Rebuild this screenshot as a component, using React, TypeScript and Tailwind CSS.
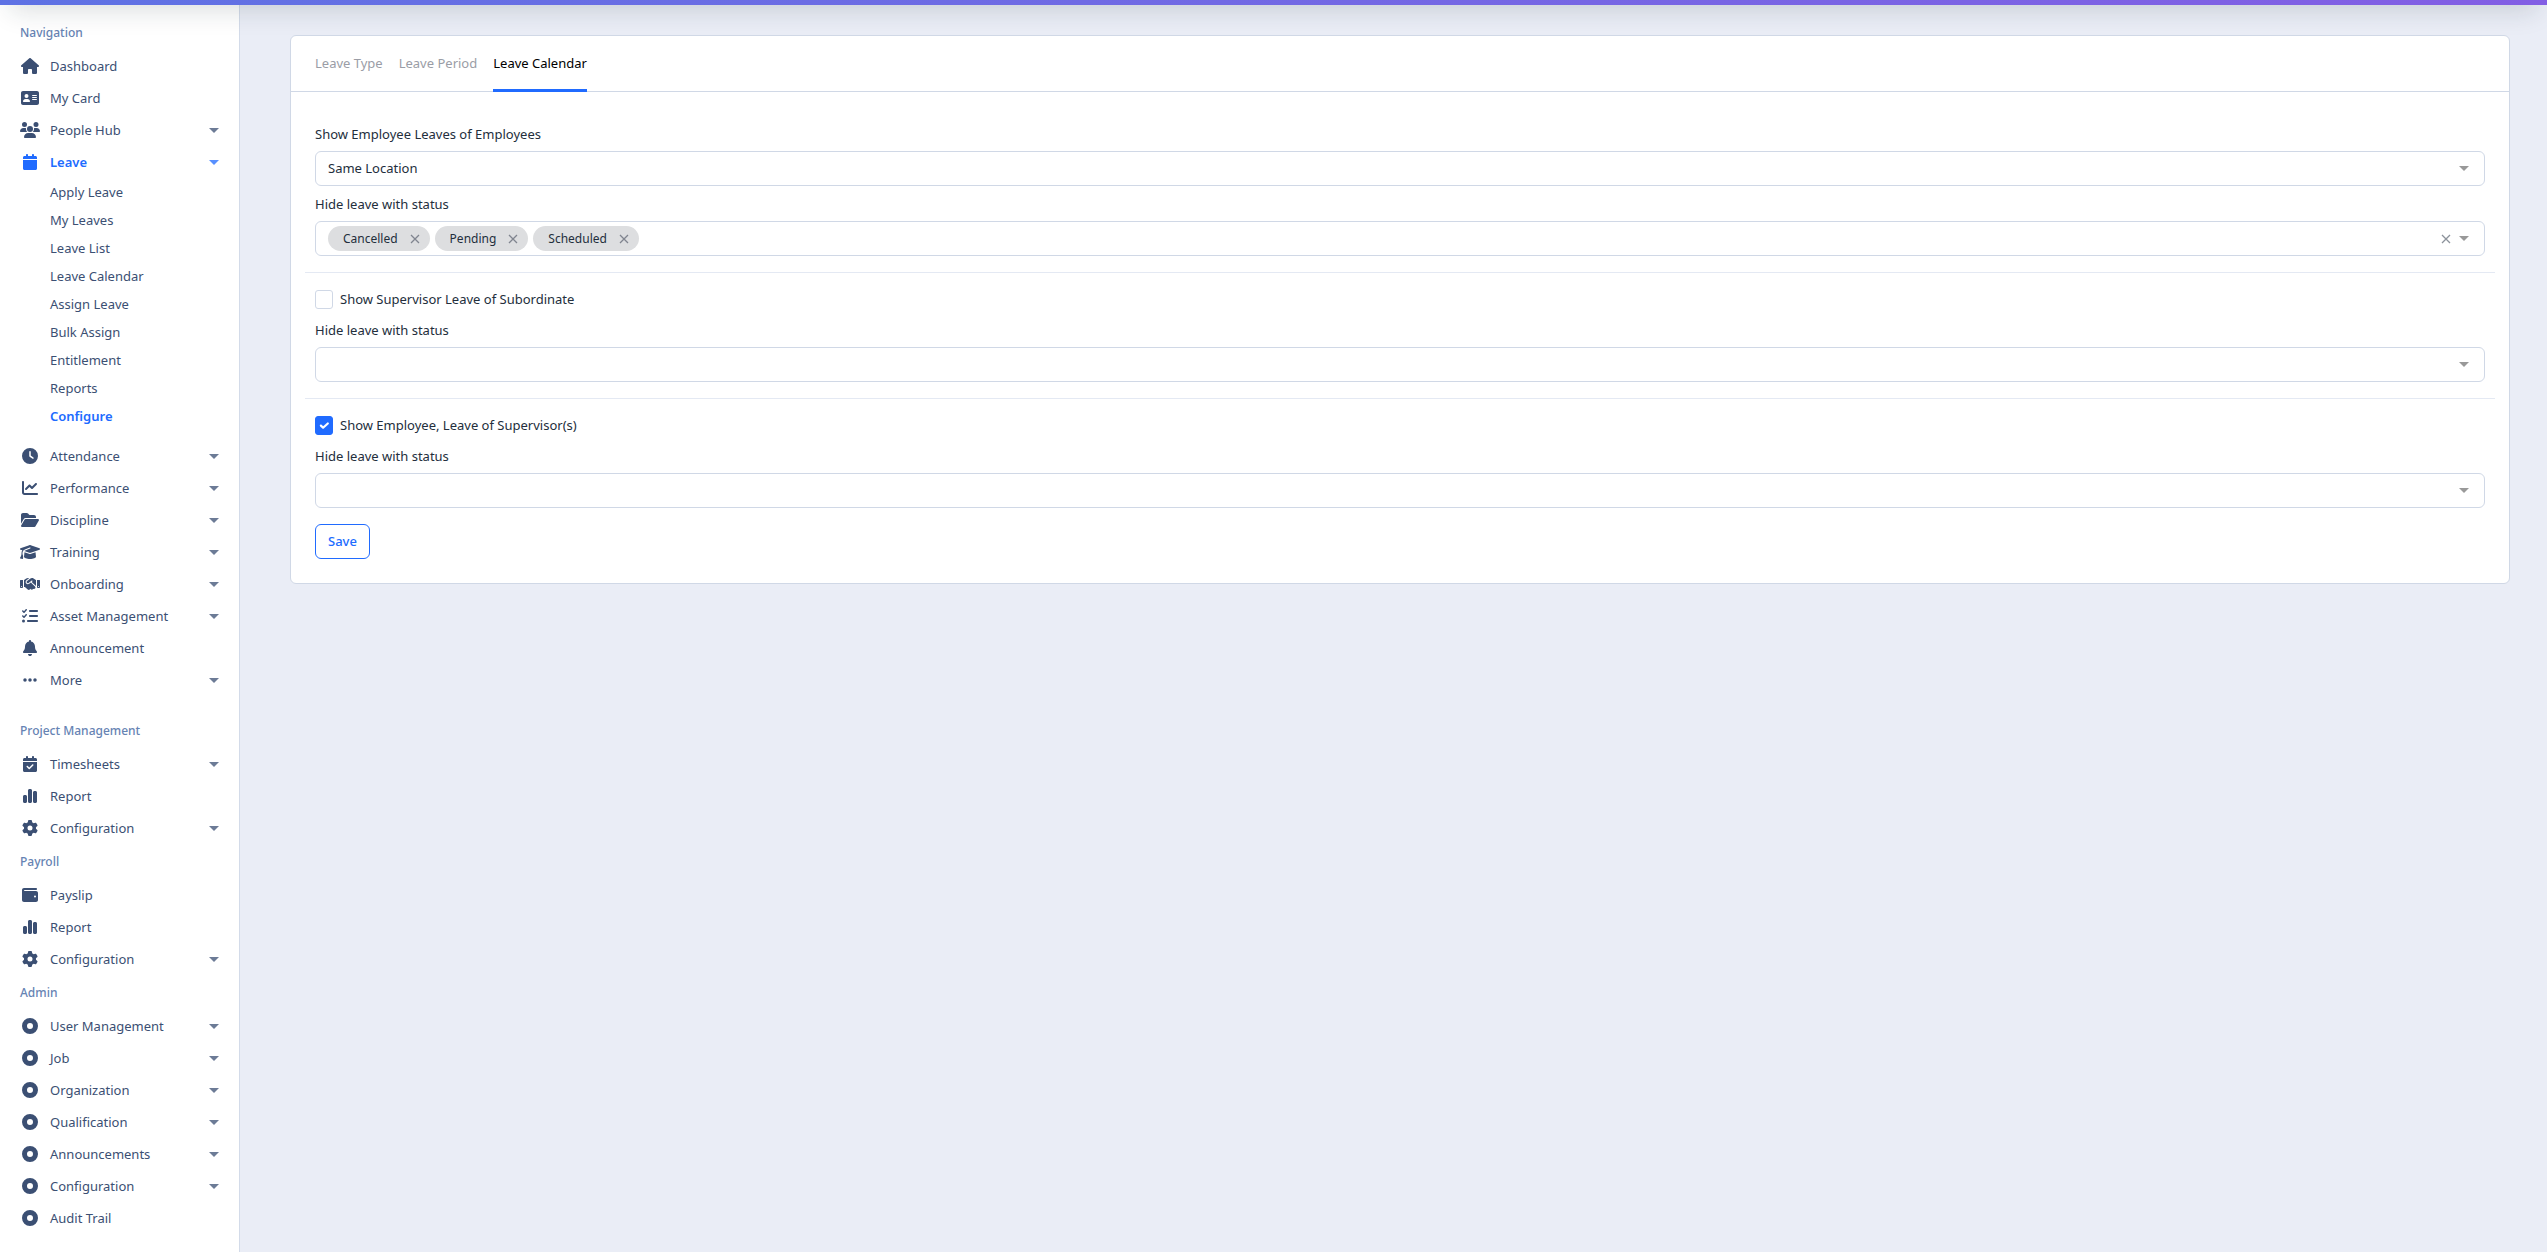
import { useState } from 'react';
import type { ComponentType, ReactNode } from 'react';
import {
  FaHouse,
  FaAddressCard,
  FaUsers,
  FaCalendar,
  FaClock,
  FaChartLine,
  FaFolderOpen,
  FaGraduationCap,
  FaHandshake,
  FaListCheck,
  FaBell,
  FaEllipsis,
  FaCalendarCheck,
  FaChartSimple,
  FaGear,
  FaCircleDot,
} from 'react-icons/fa6';

interface NavItem {
  label: string;
  icon: ComponentType<{ className?: string }>;
  caret?: boolean;
  active?: boolean;
  children?: string[];
}

interface NavSection {
  title: string;
  items: NavItem[];
}

function Wallet({ className }: { className?: string }) {
  return (
    <svg viewBox="0 0 512 512" fill="currentColor" className={className}>
      <path d="M64 32C28.7 32 0 60.7 0 96v320c0 35.3 28.7 64 64 64h384c35.3 0 64-28.7 64-64V192c0-35.3-28.7-64-64-64H80c-8.8 0-16-7.2-16-16s7.2-16 16-16h368c17.7 0 32-14.3 32-32s-14.3-32-32-32H64zm352 240a32 32 0 1 1 0 64 32 32 0 1 1 0-64z" />
    </svg>
  );
}

const sections: NavSection[] = [
  {
    title: 'Navigation',
    items: [
      { label: 'Dashboard', icon: FaHouse },
      { label: 'My Card', icon: FaAddressCard },
      { label: 'People Hub', icon: FaUsers, caret: true },
      {
        label: 'Leave',
        icon: FaCalendar,
        caret: true,
        active: true,
        children: [
          'Apply Leave',
          'My Leaves',
          'Leave List',
          'Leave Calendar',
          'Assign Leave',
          'Bulk Assign',
          'Entitlement',
          'Reports',
          'Configure',
        ],
      },
      { label: 'Attendance', icon: FaClock, caret: true },
      { label: 'Performance', icon: FaChartLine, caret: true },
      { label: 'Discipline', icon: FaFolderOpen, caret: true },
      { label: 'Training', icon: FaGraduationCap, caret: true },
      { label: 'Onboarding', icon: FaHandshake, caret: true },
      { label: 'Asset Management', icon: FaListCheck, caret: true },
      { label: 'Announcement', icon: FaBell },
      { label: 'More', icon: FaEllipsis, caret: true },
    ],
  },
  {
    title: 'Project Management',
    items: [
      { label: 'Timesheets', icon: FaCalendarCheck, caret: true },
      { label: 'Report', icon: FaChartSimple },
      { label: 'Configuration', icon: FaGear, caret: true },
    ],
  },
  {
    title: 'Payroll',
    items: [
      { label: 'Payslip', icon: Wallet },
      { label: 'Report', icon: FaChartSimple },
      { label: 'Configuration', icon: FaGear, caret: true },
    ],
  },
  {
    title: 'Admin',
    items: [
      { label: 'User Management', icon: FaCircleDot, caret: true },
      { label: 'Job', icon: FaCircleDot, caret: true },
      { label: 'Organization', icon: FaCircleDot, caret: true },
      { label: 'Qualification', icon: FaCircleDot, caret: true },
      { label: 'Announcements', icon: FaCircleDot, caret: true },
      { label: 'Configuration', icon: FaCircleDot, caret: true },
      { label: 'Audit Trail', icon: FaCircleDot },
    ],
  },
];

const tabs = ['Leave Type', 'Leave Period', 'Leave Calendar'];

function Caret({ className = 'border-t-[#999]' }: { className?: string }) {
  return <span className={`h-0 w-0 border-x-5 border-t-5 border-x-transparent ${className}`} />;
}

function Cross() {
  return (
    <svg viewBox="0 0 10 10" className="h-2.5 w-2.5" fill="none" stroke="currentColor" strokeWidth="1.3">
      <path d="M1 1l8 8M9 1L1 9" />
    </svg>
  );
}

function NavRow({ item }: { item: NavItem }) {
  const Icon = item.icon;
  return (
    <li>
      <a
        href="#"
        className={`flex h-8 items-center gap-2.5 px-5 ${item.active ? 'font-semibold text-[#206bff]' : 'text-[#3b4f73]'}`}
      >
        <Icon className="h-4 w-5 shrink-0" />
        <span className="flex-1">{item.label}</span>
        {item.caret && <Caret className={item.active ? 'border-t-[#5890ff]' : 'border-t-[#6c7b96]'} />}
      </a>
      {item.children && (
        <ul className="pb-2.5">
          {item.children.map((child) => (
            <li key={child}>
              <a
                href="#"
                className={`flex h-7 items-center pl-[50px] ${child === 'Configure' ? 'font-semibold text-[#206bff]' : 'text-[#3b4f73]'}`}
              >
                {child}
              </a>
            </li>
          ))}
        </ul>
      )}
    </li>
  );
}

function Sidebar() {
  return (
    <aside className="w-60 shrink-0 border-r border-[#d3dbe9] bg-white pt-2.5">
      <nav>
        {sections.map((section, i) => (
          <div key={section.title} className={i === 0 ? 'mb-[17px]' : ''}>
            <h6 className="flex h-[35px] items-center pl-5 text-xs font-medium text-[#6683b3]">{section.title}</h6>
            <ul>
              {section.items.map((item) => (
                <NavRow key={item.label} item={item} />
              ))}
            </ul>
          </div>
        ))}
      </nav>
    </aside>
  );
}

function StatusSelect({ id, initial = [] }: { id: string; initial?: string[] }) {
  const [values, setValues] = useState(initial);
  return (
    <div>
      <label htmlFor={id} className="mb-1.5 block">
        Hide leave with status
      </label>
      <div className="flex h-[35px] items-center rounded-md border border-[#d0d8e6] bg-white pl-3 pr-[15px]">
        <div className="flex flex-1 items-center gap-[5px]">
          {values.map((value) => (
            <span key={value} className="flex h-[25px] items-center gap-3 rounded-full bg-[#dddee0] pl-[15px] pr-2.5 text-xs">
              {value}
              <button
                type="button"
                aria-label={`Remove ${value}`}
                className="text-[#80858f]"
                onClick={() => setValues(values.filter((v) => v !== value))}
              >
                <Cross />
              </button>
            </span>
          ))}
          <input id={id} type="text" className="min-w-0 flex-1 bg-transparent outline-none" />
        </div>
        {values.length > 0 && (
          <button type="button" aria-label="Clear all" className="mr-2 text-[#8c929b]" onClick={() => setValues([])}>
            <Cross />
          </button>
        )}
        <Caret />
      </div>
    </div>
  );
}

function CheckRow({ id, checked = false, children }: { id: string; checked?: boolean; children: ReactNode }) {
  return (
    <div className="mb-2.5 flex h-[21px] items-center gap-[7px]">
      <span className="grid h-[19px] w-[18px]">
        <input
          id={id}
          type="checkbox"
          defaultChecked={checked}
          className="peer col-start-1 row-start-1 appearance-none rounded-[3px] border border-[#d0d8e6] bg-white checked:border-[#206bff] checked:bg-[#206bff]"
        />
        <svg
          viewBox="0 0 16 16"
          className="pointer-events-none invisible col-start-1 row-start-1 h-4 w-4 place-self-center peer-checked:visible"
          fill="none"
          stroke="#fff"
          strokeWidth="2.2"
          strokeLinecap="round"
          strokeLinejoin="round"
        >
          <path d="M4.9 7.6l2.2 2.1 4.7-4.2" />
        </svg>
      </span>
      <label htmlFor={id}>{children}</label>
    </div>
  );
}

export default function App() {
  return (
    <div className="flex min-h-screen flex-col overflow-hidden bg-[#eaedf6] font-['Segoe_UI','Noto_Sans',sans-serif] text-[13px] leading-[21px] text-[#232e3c]">
      {/* header strip, mostly scrolled out of view */}
      <div className="relative z-10 -mt-20 h-[85px] shrink-0 bg-linear-to-r from-[#5e72e4] to-[#825ee4] shadow-[0_16px_26px_-10px_rgba(20,40,50,0.15)]" />
      <div className="flex flex-1">
        <Sidebar />
        <main className="min-w-0 flex-1 pl-[50px] pr-[37px] pt-[30px]">
          <div className="rounded-md border border-[#d0d8e6] bg-white">
            <div className="flex h-14 gap-4 border-b border-[#d0d8e6] px-6">
              {tabs.map((tab) => (
                <a
                  key={tab}
                  href="#"
                  className={`-mb-px flex border-b-3 pt-[17px] ${tab === 'Leave Calendar' ? 'border-[#206bff] text-black' : 'border-transparent text-[#9a9da6]'}`}
                >
                  {tab}
                </a>
              ))}
            </div>

            <form className="px-6 pb-6 pt-8" onSubmit={(e) => e.preventDefault()}>
              <label htmlFor="scope" className="mb-1.5 block">
                Show Employee Leaves of Employees
              </label>
              <div className="mb-2 grid items-center">
                <select
                  id="scope"
                  className="col-start-1 row-start-1 h-[35px] w-full appearance-none rounded-md border border-[#d0d8e6] bg-white px-3"
                >
                  <option>Same Location</option>
                </select>
                <span className="pointer-events-none col-start-1 row-start-1 mr-4 flex justify-end">
                  <Caret />
                </span>
              </div>
              <StatusSelect id="employee-status" initial={['Cancelled', 'Pending', 'Scheduled']} />

              <hr className="-mx-2.5 my-4 border-[#e4e9f3]" />
              <CheckRow id="supervisor-leave">Show Supervisor Leave of Subordinate</CheckRow>
              <StatusSelect id="supervisor-status" />

              <hr className="-mx-2.5 my-4 border-[#e4e9f3]" />
              <CheckRow id="employee-leave" checked>
                Show Employee, Leave of Supervisor(s)
              </CheckRow>
              <StatusSelect id="subordinate-status" />

              <button
                type="submit"
                className="mt-4 h-[35px] rounded-md border border-[#206bff] bg-white px-3 font-medium text-[#206bff]"
              >
                Save
              </button>
            </form>
          </div>
        </main>
      </div>
    </div>
  );
}
